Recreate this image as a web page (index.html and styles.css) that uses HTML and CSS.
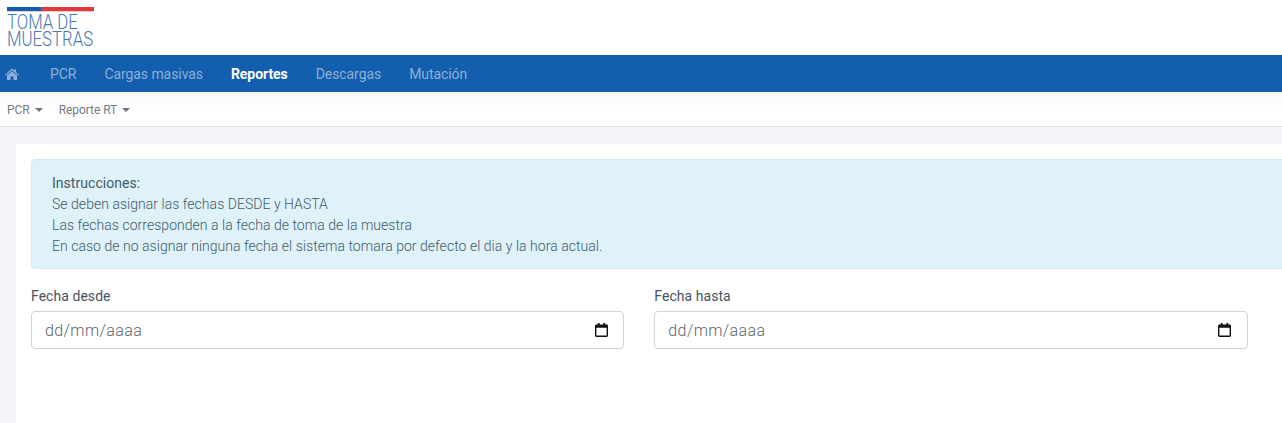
FILE: index.html
```html
<!DOCTYPE html>
<html lang="es">
<head>
<meta charset="utf-8">
<title>Toma de Muestras</title>
<link rel="stylesheet" href="styles.css">
</head>
<body>
<header class="brand">
  <div class="logo">
    <div class="flag"><span class="flag-blue"></span><span class="flag-red"></span></div>
    <div class="logo-text">TOMA DE<br>MUESTRAS</div>
  </div>
</header>
<nav class="mainnav">
  <a class="home" href="#" aria-label="Inicio">
    <svg width="14" height="12" viewBox="0 0 14 12"><path fill="currentColor" d="M7 0.6 L9.3 2.6 V1.2 H11 V4.1 L14 6.7 L13.2 7.5 L7 2.2 L0.8 7.5 L0 6.7 Z M2 7.4 L7 3.2 L12 7.4 V12 H8.4 V8.6 H5.6 V12 H2 Z"/></svg>
  </a>
  <a href="#">PCR</a>
  <a href="#">Cargas masivas</a>
  <a href="#" class="active">Reportes</a>
  <a href="#">Descargas</a>
  <a href="#">Mutación</a>
</nav>
<nav class="subnav">
  <a href="#">PCR<i class="caret"></i></a>
  <a href="#">Reporte RT<i class="caret"></i></a>
</nav>
<main class="page">
  <section class="card">
    <div class="alert">
      <div class="alert-title">Instrucciones:</div>
      <div>Se deben asignar las fechas DESDE y HASTA</div>
      <div>Las fechas corresponden a la fecha de toma de la muestra</div>
      <div>En caso de no asignar ninguna fecha el sistema tomara por defecto el dia y la hora actual.</div>
    </div>
    <div class="form-row">
      <div class="form-group">
        <label class="label">Fecha desde</label>
        <div class="date-field"><span>dd/mm/aaaa</span>
          <svg class="cal" width="13" height="14" viewBox="0 0 14 15" preserveAspectRatio="none"><path fill="#111" d="M3 0h2v1.5h4V0h2v1.5h1.5A1.5 1.5 0 0 1 14 3v10.500a1.500 1.500 0 0 1-1.500 1.500h-11A1.500 1.500 0 0 1 0 13.500V3a1.500 1.500 0 0 1 1.500-1.500H3zM1.500 5v8.500h11V5z"/></svg>
        </div>
      </div>
      <div class="form-group">
        <label class="label">Fecha hasta</label>
        <div class="date-field"><span>dd/mm/aaaa</span>
          <svg class="cal" width="13" height="14" viewBox="0 0 14 15" preserveAspectRatio="none"><path fill="#111" d="M3 0h2v1.5h4V0h2v1.5h1.5A1.5 1.5 0 0 1 14 3v10.500a1.500 1.500 0 0 1-1.500 1.500h-11A1.500 1.500 0 0 1 0 13.500V3a1.500 1.500 0 0 1 1.500-1.500H3zM1.500 5v8.500h11V5z"/></svg>
        </div>
      </div>
    </div>
  </section>
</main>
</body>
</html>
```
FILE: styles.css
```css
* { box-sizing: border-box; }
html, body { margin: 0; height: 100%; }
body {
  font-family: Roboto, "Liberation Sans", sans-serif;
  background: #f3f4f9;
  overflow: hidden;
  display: flex;
  flex-direction: column;
  height: 423px;
}
a { text-decoration: none; }

.brand { height: 55px; background: #fff; padding: 7px 0 0 7px; flex: none; }
.logo { width: 87px; }
.flag { display: flex; height: 5px; border-bottom: 1px solid #f0c9c9; }
.flag-blue { width: 34px; background: #135eae; }
.flag-red { flex: 1; background: #e0393e; }
.logo-text {
  font-size: 19.500px;
  font-weight: 300;
  line-height: 17px;
  color: #4a78b0;
  margin-top: 2px;
  white-space: nowrap;
  transform: scaleX(0.86);
  transform-origin: left top;
}

.mainnav {
  height: 37px;
  flex: none;
  background: #135eae;
  display: flex;
  align-items: center;
  padding-left: 5px;
  gap: 28px;
  font-size: 14px;
  letter-spacing: -0.07px;
}
.mainnav a { color: #8eb0d6; }
.mainnav .home { display: flex; margin-right: 3px; }
.mainnav .active { color: #fff; font-weight: 700; }

.subnav {
  height: 35px;
  flex: none;
  background: linear-gradient(#f8f8f8, #fff 60%);
  border-bottom: 1px solid #e3e4eb;
  display: flex;
  align-items: center;
  padding: 2px 0 0 7px;
  gap: 16px;
  font-size: 12px;
  letter-spacing: -0.05px;
}
.subnav a { color: #737b83; display: flex; align-items: center; }
.caret {
  margin-left: 5px;
  border-top: 4px solid #6c757d;
  border-left: 4px solid transparent;
  border-right: 4px solid transparent;
}

.page { flex: 1; padding: 17px 0 0 16px; min-height: 0; }
.card {
  background: #fff;
  height: 100%;
  padding: 15px 0 0 15px;
}
.alert {
  width: 1300px;
  height: 110px;
  background: #dff1f9;
  border: 1px solid #d2ecf6;
  border-radius: 4px;
  padding: 13px 20px;
  font-size: 14px;
  font-weight: 300;
  line-height: 21px;
  letter-spacing: 0.035px;
  color: #3d5c6c;
}
.alert-title { font-weight: 400; }

.form-row { display: flex; gap: 30px; margin-top: 17px; }
.form-group { width: 593.300px; }
.label {
  display: block;
  font-size: 14px;
  line-height: 21px;
  letter-spacing: 0.05px;
  color: #47525d;
  margin-bottom: 4px;
}
.date-field {
  height: 38px;
  border: 1px solid #ced4da;
  border-radius: 4px;
  background: #fff;
  display: flex;
  align-items: center;
  justify-content: space-between;
  padding: 0 15.400px 0 13px;
  font-size: 16px;
  font-weight: 300;
  color: #5a6570;
  letter-spacing: 0.4px;
}
.cal { flex: none; }
```
